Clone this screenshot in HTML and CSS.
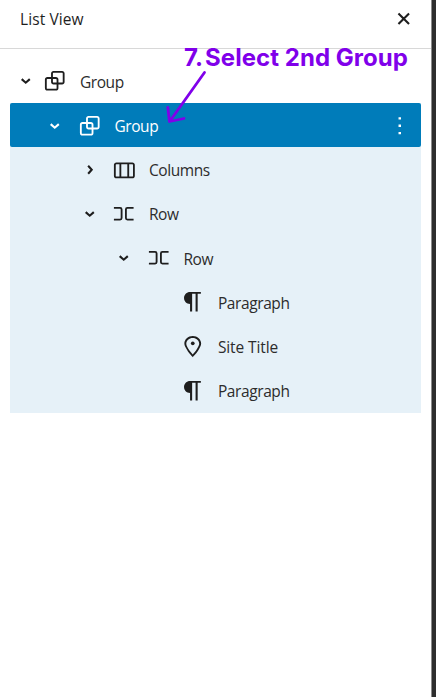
FILE: index.html
```
<!DOCTYPE html>
<html lang="en">
<head>
<meta charset="utf-8">
<title>List View</title>
<link rel="stylesheet" href="styles.css">
</head>
<body>
<svg class="symbols" aria-hidden="true">
  <symbol id="down" viewBox="0 0 24 24"><path d="M8.700 10.700 12 13.600l3.300-2.900" fill="none" stroke="currentColor" stroke-width="1.700"/></symbol>
  <symbol id="right" viewBox="0 0 24 24"><path d="M10.700 8.700 13.600 12l-2.900 3.300" fill="none" stroke="currentColor" stroke-width="1.700"/></symbol>
  <symbol id="group" viewBox="0 0 24 24"><path d="M18 4h-7c-1.100 0-2 .9-2 2v3H6c-1.100 0-2 .9-2 2v7c0 1.100.9 2 2 2h7c1.100 0 2-.9 2-2v-3h3c1.100 0 2-.9 2-2V6c0-1.100-.9-2-2-2zm-4.500 14c0 .3-.2.5-.5.5H6c-.3 0-.5-.2-.5-.5v-7c0-.3.2-.5.5-.5h3V13c0 1.100.9 2 2 2h2.500v3zm0-4.500H11c-.3 0-.5-.2-.5-.5v-2.500H13c.3 0 .5.2.5.5v2.500zm5-.5c0 .3-.2.5-.5.5h-3V11c0-1.100-.9-2-2-2h-2.500V6c0-.3.2-.5.5-.5h7c.3 0 .5.2.5.5v7z"/></symbol>
  <symbol id="columns" viewBox="0 0 24 24"><path d="M19 6H6c-1.100 0-2 .9-2 2v9c0 1.100.9 2 2 2h13c1.100 0 2-.9 2-2V8c0-1.100-.9-2-2-2zm-4.100 1.500v10H10v-10h4.900zM5.500 17V8c0-.3.2-.5.5-.5h2.500v10H6c-.3 0-.5-.2-.5-.5zm14 0c0 .3-.2.5-.5.5h-2.600v-10H19c.3 0 .5.2.5.5v9z"/></symbol>
  <symbol id="row" viewBox="0 0 24 24"><path d="M4 6.500h5a2 2 0 0 1 2 2v7a2 2 0 0 1-2 2H4V16h5a.5.5 0 0 0 .5-.5v-7A.5.5 0 0 0 9 8H4V6.500Zm16 0h-5a2 2 0 0 0-2 2v7a2 2 0 0 0 2 2h5V16h-5a.5.5 0 0 1-.5-.5v-7A.5.5 0 0 1 15 8h5V6.500Z"/></symbol>
  <symbol id="paragraph" viewBox="0 0 24 24"><path d="M18.600 4H9.900C7 4 4.900 6.200 4.900 8.900s2 4.700 4.900 4.900V20h1.700V5.500h2.800V20h1.700V5.500h2.600V4z"/></symbol>
  <symbol id="marker" viewBox="0 0 24 24"><path d="M12 4c-3.600 0-6.500 2.800-6.500 6.200 0 .8.3 1.800.9 3.100.5 1.100 1.200 2.300 2 3.600.7 1 3 3.800 3.200 3.900l.4.5.4-.5c.2-.2 2.600-2.900 3.200-3.900.8-1.200 1.500-2.500 2-3.600.6-1.300.9-2.300.9-3.100C18.500 6.800 15.600 4 12 4zm4.300 8.700c-.5 1-1.100 2.200-1.900 3.400-.5.7-1.700 2.200-2.400 3-.7-.8-1.900-2.300-2.400-3-.8-1.200-1.400-2.300-1.900-3.300-.6-1.400-.7-2.200-.7-2.500 0-2.600 2.200-4.700 5-4.700s5 2.100 5 4.700c0 .2-.1 1-.7 2.400z" transform="translate(-.6 0) scale(1.050 1)"/><circle cx="12" cy="10" r="1.500"/></symbol>
  <symbol id="more" viewBox="0 0 24 24"><path d="M13 19h-2v-2h2v2zm0-6h-2v-2h2v2zm0-6h-2V5h2v2z"/></symbol>
  <symbol id="close" viewBox="0 0 24 24"><path d="m7.700 7.700 8.600 8.600m0-8.600-8.600 8.600" fill="none" stroke="currentColor" stroke-width="1.700"/></symbol>
</svg>
<div class="panel">
  <header class="header"><span class="label title">List View</span><svg class="icon"><use href="#close"/></svg></header>
  <div class="tree">
    <div class="item level-1"><svg class="icon toggle"><use href="#down"/></svg><svg class="icon"><use href="#group"/></svg><span class="label">Group</span></div>
    <div class="branch">
      <div class="item level-2 selected"><svg class="icon toggle"><use href="#down"/></svg><svg class="icon"><use href="#group"/></svg><span class="label">Group</span><svg class="icon more"><use href="#more"/></svg></div>
      <div class="item level-3"><svg class="icon toggle"><use href="#right"/></svg><svg class="icon"><use href="#columns"/></svg><span class="label">Columns</span></div>
      <div class="item level-3"><svg class="icon toggle"><use href="#down"/></svg><svg class="icon"><use href="#row"/></svg><span class="label">Row</span></div>
      <div class="item level-4"><svg class="icon toggle"><use href="#down"/></svg><svg class="icon"><use href="#row"/></svg><span class="label">Row</span></div>
      <div class="item level-5"><svg class="icon"><use href="#paragraph"/></svg><span class="label">Paragraph</span></div>
      <div class="item level-5"><svg class="icon"><use href="#marker"/></svg><span class="label site">Site Title</span></div>
      <div class="item level-5"><svg class="icon"><use href="#paragraph"/></svg><span class="label">Paragraph</span></div>
    </div>
  </div>
</div>
<div class="note"><span>7.</span><span>Select 2nd Group</span></div>
<svg class="arrow" viewBox="0 0 48 60"><path d="M44.500 7.500 10 56M7.800 42.500 9.500 56.500 24 53.500"/></svg>
</body>
</html>
```
FILE: styles.css
```
* { box-sizing: border-box; }
body {
  margin: 0;
  height: 697px;
  overflow: hidden;
  position: relative;
  background: #2e2e2e;
  color: #1e1e1e;
  font: 15.5px/22px "Open Sans", "Noto Sans", sans-serif;
}
.symbols { position: absolute; width: 0; height: 0; }
.panel {
  width: 432px;
  height: 697px;
  background: #fff;
  border-right: 1px solid #8c8c8c;
}
.header {
  height: 49px;
  display: flex;
  align-items: center;
  justify-content: space-between;
  padding: 0 13px 11px 20px;
  border-bottom: 1px solid #d8d8d8;
}
.title { letter-spacing: 0.1px; }
.tree { padding: 10px 10px 0; }
.item {
  display: flex;
  align-items: center;
  height: 44.2px;
  padding-right: 7px;
}
.branch { background: #e6f1f8; }
.selected {
  background: #007cba;
  color: #fff;
  border-radius: 2px;
}
.level-1 { padding-left: 0.5px; }
.level-2 { padding-left: 30px; }
.level-3 { padding-left: 64.5px; }
.level-4 { padding-left: 99px; }
.level-5 { padding-left: 168px; }
.icon { width: 29.5px; height: 29.5px; flex: none; fill: currentColor; }
.branch .toggle { margin-right: 5px; }
.more { margin-left: auto; }
.item .label {
  margin-left: 10.4px;
  padding-top: 1.5px;
  letter-spacing: -0.4px;
}
.item .site { letter-spacing: -0.1px; }
.item:not(.selected) .label { color: #2c2c2c; }
.note {
  position: absolute;
  left: 184px;
  top: 43px;
  display: flex;
  gap: 2px;
  color: #8000ea;
  font: 700 24px/30px Inter, sans-serif;
  letter-spacing: 0.04px;
  white-space: nowrap;
}
.arrow {
  position: absolute;
  left: 160px;
  top: 65px;
  width: 48px;
  height: 60px;
  fill: none;
  stroke: #8000ea;
  stroke-width: 2.8;
  stroke-linecap: round;
  stroke-linejoin: round;
}
```
